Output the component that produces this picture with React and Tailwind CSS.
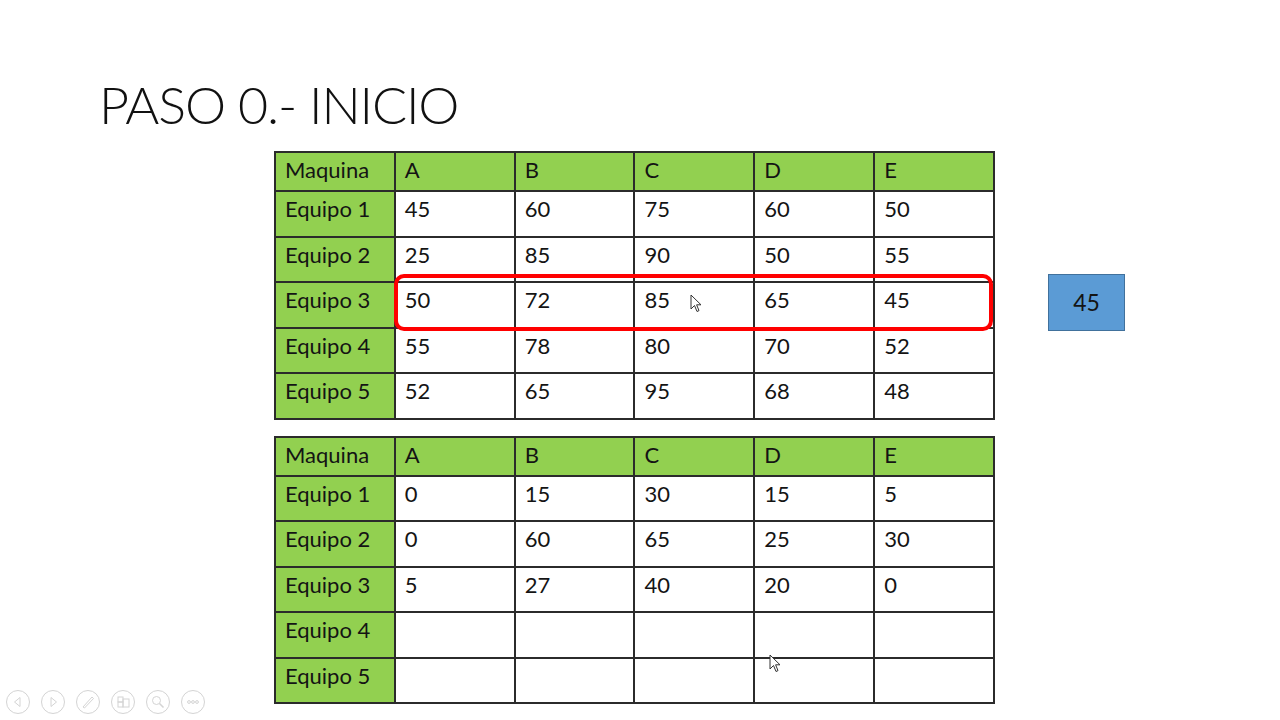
import React from 'react';

const HEAD = ['Maquina', 'A', 'B', 'C', 'D', 'E'];

const TOP_ROWS = [
  ['Equipo 1', 45, 60, 75, 60, 50],
  ['Equipo 2', 25, 85, 90, 50, 55],
  ['Equipo 3', 50, 72, 85, 65, 45],
  ['Equipo 4', 55, 78, 80, 70, 52],
  ['Equipo 5', 52, 65, 95, 68, 48],
];

const BOTTOM_ROWS = [
  ['Equipo 1', 0, 15, 30, 15, 5],
  ['Equipo 2', 0, 60, 65, 25, 30],
  ['Equipo 3', 5, 27, 40, 20, 0],
  ['Equipo 4', '', '', '', '', ''],
  ['Equipo 5', '', '', '', '', ''],
];

const cell = 'border-2 border-[#2b2b2b] px-[9px] pt-[4px] text-left font-normal align-top';

const Grid = ({ rows }) => (
  <table className="table-fixed border-collapse w-[721px] text-[22px] leading-[1.2] text-[#141414]">
    <thead>
      <tr className="h-[39px] bg-[#92d050]">
        {HEAD.map(h => <th key={h} className={cell}>{h}</th>)}
      </tr>
    </thead>
    <tbody>
      {rows.map(r => (
        <tr key={r[0]} className="h-[45.5px]">
          {r.map((v, i) => (
            <td key={i} className={`${cell} ${i === 0 ? 'bg-[#92d050]' : 'bg-white'}`}>{v}</td>
          ))}
        </tr>
      ))}
    </tbody>
  </table>
);

const Cursor = ({ className }) => (
  <svg className={className} width="12" height="19" viewBox="0 0 12 19">
    <path d="M1 1 L1 15 L4.5 11.5 L7 17.5 L9 16.6 L6.6 10.8 L11 10.8 Z" fill="#fff" stroke="#333" strokeWidth="1" strokeLinejoin="round" />
  </svg>
);

const ToolIcon = ({ children }) => (
  <svg width="26" height="26" viewBox="0 0 26 26" className="text-[#d4d4d4]">
    <circle cx="13" cy="13" r="11.5" fill="none" stroke="currentColor" strokeWidth="1" />
    {children}
  </svg>
);

export default function App() {
  return (
    <div className="relative w-[1280px] h-[720px] bg-white overflow-hidden font-['Lato',sans-serif]">
      <h1 className="pl-[99px] pt-[78px] text-[52px] leading-none font-light text-[#111] tracking-[-1.15px]">
        PASO 0.- INICIO
      </h1>

      <div className="pl-[274px] mt-[21px]">
        <div className="flex items-start">
          <div className="relative">
            <Grid rows={TOP_ROWS} />
            <div className="absolute left-[120px] top-[123px] w-[599px] h-[57px] rounded-[10px] border-[4px] border-[#ff0000]" />
          </div>
          <div className="ml-[53px] mt-[123px] w-[77px] h-[57px] bg-[#5b9bd5] border border-[#41719c] flex items-center justify-center text-[23px] text-[#141414]">
            45
          </div>
        </div>

        <div className="mt-[16px]">
          <Grid rows={BOTTOM_ROWS} />
        </div>
      </div>

      <Cursor className="absolute left-[690px] top-[294px]" />
      <Cursor className="absolute left-[769px] top-[654px]" />

      <div className="absolute left-[5px] top-[689px] flex gap-[9px]">
        <ToolIcon><path d="M15 8.5 L9.5 13 L15 17.5 Z" fill="none" stroke="currentColor" /></ToolIcon>
        <ToolIcon><path d="M11 8.5 L16.5 13 L11 17.5 Z" fill="none" stroke="currentColor" /></ToolIcon>
        <ToolIcon><path d="M8 18 L17 8 L18.5 9.5 L9.5 19 Z" fill="none" stroke="currentColor" /></ToolIcon>
        <ToolIcon>
          <rect x="8" y="8" width="5" height="5" fill="none" stroke="currentColor" />
          <rect x="8" y="13" width="5" height="5" fill="none" stroke="currentColor" />
          <rect x="13" y="10" width="6" height="8" fill="none" stroke="currentColor" />
        </ToolIcon>
        <ToolIcon>
          <circle cx="11.5" cy="11.5" r="4" fill="none" stroke="currentColor" />
          <path d="M14.5 14.5 L18.5 18.5" stroke="currentColor" strokeWidth="1.6" />
        </ToolIcon>
        <ToolIcon>
          <circle cx="9" cy="13" r="1.4" fill="none" stroke="currentColor" />
          <circle cx="13" cy="13" r="1.4" fill="none" stroke="currentColor" />
          <circle cx="17" cy="13" r="1.4" fill="none" stroke="currentColor" />
        </ToolIcon>
      </div>
    </div>
  );
}
